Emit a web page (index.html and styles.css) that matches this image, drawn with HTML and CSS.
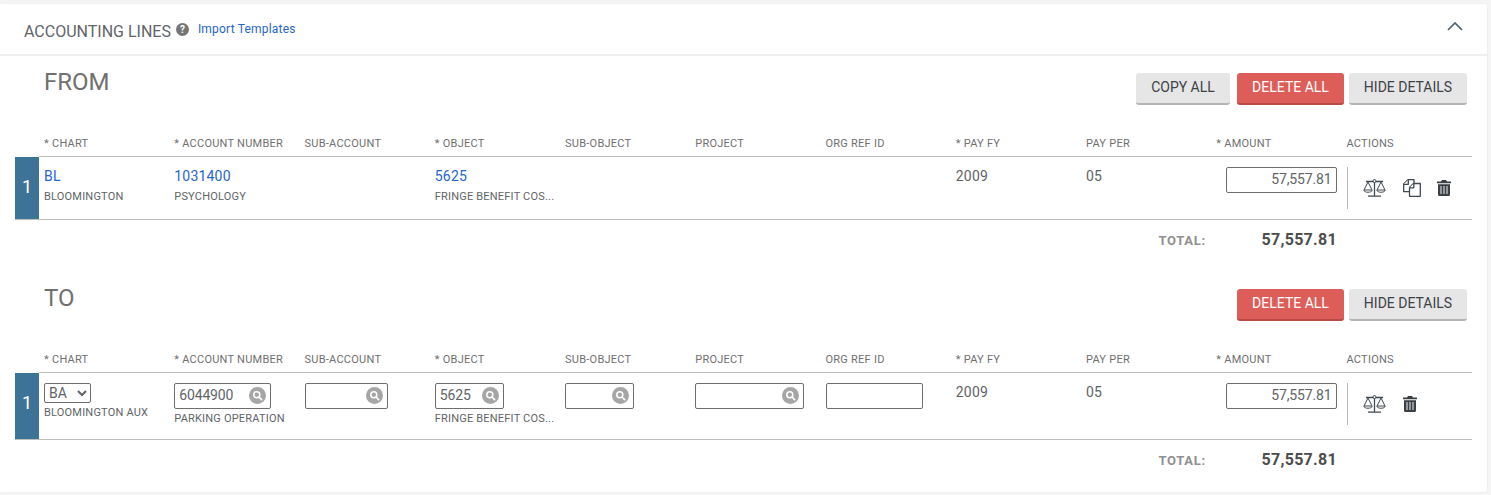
FILE: index.html
```html
<!DOCTYPE html>
<html lang="en">
<head>
    <meta charset="UTF-8">
    <meta name="viewport" content="width=device-width, initial-scale=1.0">
    <title>Accounting Lines</title>
    <link rel="stylesheet" href="styles.css">
</head>
<body>
    <svg class="icon-defs" width="0" height="0" aria-hidden="true">
        <symbol id="i-search" viewBox="0 0 17 17">
            <circle cx="8.5" cy="8.5" r="8.5" fill="#a6a6a6"/>
            <circle cx="7.8" cy="7.8" r="3" fill="none" stroke="#fff" stroke-width="1.5"/>
            <path d="M10 10l2.6 2.6" stroke="#fff" stroke-width="1.7" stroke-linecap="round"/>
        </symbol>
        <symbol id="i-balance" viewBox="0 0 23 18">
            <g fill="none" stroke="#3f4a52" stroke-width="1">
                <path d="M3 2.500h17M11.500 3v14M5 17.200h13" stroke-width="1.300"/>
                <circle cx="11.500" cy="2" r="1.500" fill="#fff"/>
                <path d="M5 3L1 11h8zM18 3l-4 8h8z"/>
                <path d="M.7 11c.5 3 8.100 3 8.600 0M13.700 11c.5 3 8.100 3 8.600 0"/>
            </g>
        </symbol>
        <symbol id="i-copy" viewBox="0 0 18 18">
            <g fill="#fff" stroke="#3f4a52" stroke-width="1.300" stroke-linejoin="round">
                <path d="M.7 5L5 .7h6v12H.7z"/>
                <path d="M.7 5.300h4.600V.7"/>
                <path d="M6.500 8.500L10.500 4.500h6.800v12.800H6.500z"/>
                <path d="M6.500 8.800h4.300V4.500"/>
            </g>
        </symbol>
        <symbol id="i-trash" viewBox="0 0 14 16">
            <path fill="#3a3f44" d="M5 0h4l1 1.500h4v1.800H0V1.500h4zM1 4.300h12V14.500A1.500 1.500 0 0 1 11.500 16h-9A1.500 1.500 0 0 1 1 14.500z"/>
            <path stroke="#dfe3e6" stroke-width="1.100" d="M4 6v8M7 6v8M10 6v8"/>
        </symbol>
    </svg>

    <section class="panel">
        <header class="panel-header">
            <h2 class="panel-title">ACCOUNTING LINES</h2>
            <span class="help-icon">?</span>
            <a class="import-link" href="#">Import Templates</a>
            <svg class="chevron" width="16" height="9" viewBox="0 0 16 9"><path d="M1 8l7-7 7 7" fill="none" stroke="#4a6272" stroke-width="1.700"/></svg>
        </header>

        <div class="group group-from">
            <div class="group-top">
                <h3 class="group-title">FROM</h3>
                <div class="buttons">
                    <button class="btn btn-copy">COPY ALL</button>
                    <button class="btn btn-danger">DELETE ALL</button>
                    <button class="btn btn-hide">HIDE DETAILS</button>
                </div>
            </div>
            <div class="cols cols-head">
                <div>* CHART</div>
                <div>* ACCOUNT NUMBER</div>
                <div>SUB-ACCOUNT</div>
                <div>* OBJECT</div>
                <div>SUB-OBJECT</div>
                <div>PROJECT</div>
                <div>ORG REF ID</div>
                <div>* PAY FY</div>
                <div>PAY PER</div>
                <div>* AMOUNT</div>
                <div>ACTIONS</div>
            </div>
            <div class="line">
                <div class="line-num">1</div>
                <div class="cols line-cols">
                    <div class="cell"><a href="#">BL</a><small>BLOOMINGTON</small></div>
                    <div class="cell"><a href="#">1031400</a><small>PSYCHOLOGY</small></div>
                    <div class="cell"></div>
                    <div class="cell"><a href="#">5625</a><small>FRINGE BENEFIT COS...</small></div>
                    <div class="cell"></div>
                    <div class="cell"></div>
                    <div class="cell"></div>
                    <div class="cell"><span>2009</span></div>
                    <div class="cell"><span>05</span></div>
                    <div class="cell cell-amount"><input class="field field-amount" type="text" value="57,557.81"></div>
                    <div class="actions">
                        <svg class="act act-balance"><use href="#i-balance"/></svg>
                        <svg class="act act-copy"><use href="#i-copy"/></svg>
                        <svg class="act act-trash"><use href="#i-trash"/></svg>
                    </div>
                </div>
            </div>
            <div class="total"><span class="total-label">TOTAL:</span><span class="total-value">57,557.81</span></div>
        </div>

        <div class="group group-to">
            <div class="group-top">
                <h3 class="group-title">TO</h3>
                <div class="buttons">
                    <button class="btn btn-danger">DELETE ALL</button>
                    <button class="btn btn-hide">HIDE DETAILS</button>
                </div>
            </div>
            <div class="cols cols-head">
                <div>* CHART</div>
                <div>* ACCOUNT NUMBER</div>
                <div>SUB-ACCOUNT</div>
                <div>* OBJECT</div>
                <div>SUB-OBJECT</div>
                <div>PROJECT</div>
                <div>ORG REF ID</div>
                <div>* PAY FY</div>
                <div>PAY PER</div>
                <div>* AMOUNT</div>
                <div>ACTIONS</div>
            </div>
            <div class="line line-edit">
                <div class="line-num">1</div>
                <div class="cols line-cols">
                    <div class="cell">
                        <select class="chart-select"><option>BA</option></select>
                        <small class="small-chart">BLOOMINGTON AUX</small>
                    </div>
                    <div class="cell">
                        <div class="lookup size-97"><input class="field" type="text" value="6044900"><svg class="search"><use href="#i-search"/></svg></div>
                        <small>PARKING OPERATION</small>
                    </div>
                    <div class="cell">
                        <div class="lookup size-83"><input class="field" type="text"><svg class="search"><use href="#i-search"/></svg></div>
                    </div>
                    <div class="cell">
                        <div class="lookup size-69"><input class="field" type="text" value="5625"><svg class="search"><use href="#i-search"/></svg></div>
                        <small>FRINGE BENEFIT COS...</small>
                    </div>
                    <div class="cell">
                        <div class="lookup size-69"><input class="field" type="text"><svg class="search"><use href="#i-search"/></svg></div>
                    </div>
                    <div class="cell">
                        <div class="lookup size-109"><input class="field" type="text"><svg class="search"><use href="#i-search"/></svg></div>
                    </div>
                    <div class="cell">
                        <div class="lookup size-97"><input class="field" type="text"></div>
                    </div>
                    <div class="cell"><span>2009</span></div>
                    <div class="cell"><span>05</span></div>
                    <div class="cell cell-amount"><input class="field field-amount" type="text" value="57,557.81"></div>
                    <div class="actions">
                        <svg class="act act-balance"><use href="#i-balance"/></svg>
                        <svg class="act act-trash"><use href="#i-trash"/></svg>
                    </div>
                </div>
            </div>
            <div class="total"><span class="total-label">TOTAL:</span><span class="total-value">57,557.81</span></div>
        </div>
    </section>
</body>
</html>
```

FILE: styles.css
```css
:root {
    --link: #1f66c9;
    --text: #666;
    --rule: #bdbdbd;
    --steel: #3d7396;
}

* {
    box-sizing: border-box;
}

body {
    margin: 0;
    padding: 4px 4px 3px 0;
    height: 495px;
    overflow: hidden;
    background-color: #f5f5f5;
    font-family: Roboto, sans-serif;
    color: var(--text);
}

.icon-defs {
    position: absolute;
}

.panel {
    height: 488px;
    background-color: #fff;
    border-radius: 0 3px 3px 0;
    box-shadow: 0 0 2px rgba(0, 0, 0, 0.08);
}

.panel-header {
    display: flex;
    align-items: flex-start;
    height: 52px;
    padding: 18px 24px 0 24px;
    border-bottom: 2px solid #f0f0f0;
}

.panel-title {
    margin: 0;
    font-size: 16px;
    line-height: 20px;
    font-weight: 400;
    color: #5f6468;
}

.help-icon {
    width: 13px;
    height: 13px;
    margin: 1px 0 0 5px;
    border-radius: 50%;
    background-color: #757575;
    color: #fff;
    font-size: 10px;
    font-weight: 700;
    line-height: 13px;
    text-align: center;
}

.import-link {
    margin: -1px 0 0 9px;
    font-size: 12px;
    line-height: 16px;
    letter-spacing: 0.2px;
    color: var(--link);
    text-decoration: none;
}

.chevron {
    margin: 0 0 0 auto;
}

.group {
    padding: 0 15px;
}

.group-from {
    height: 216px;
}

.group-top {
    display: flex;
    justify-content: space-between;
    height: 81px;
    padding: 12px 5px 0 29px;
}

.group-title {
    margin: 0;
    font-size: 24px;
    line-height: 28px;
    font-weight: 400;
    color: #707070;
}

.buttons {
    display: flex;
    gap: 5px;
    height: 32px;
    margin-top: 5px;
}

.btn {
    height: 32px;
    padding: 0 0 2px;
    border: 0;
    border-bottom: 2px solid #b5b5b5;
    border-radius: 3px;
    background-color: #e6e6e6;
    color: #3d4246;
    font-family: inherit;
    font-size: 14px;
}

.btn-copy {
    width: 94px;
    margin-right: 2px;
}

.btn-danger {
    width: 107px;
    background-color: #dd5e59;
    border-bottom-color: #b94a46;
    color: #fff;
}

.btn-hide {
    width: 118px;
}

.cols {
    display: grid;
    grid-template-columns: repeat(10, 130.25px) 1fr;
    margin-left: 29px;
}

.cols-head {
    height: 18px;
    margin-bottom: 1px;
    font-size: 11px;
    line-height: 14px;
    letter-spacing: 0.25px;
    color: #6f6f6f;
}

.line {
    display: flex;
    height: 64px;
    border-bottom: 1px solid var(--rule);
}

.line-edit {
    height: 68px;
}

.line-num {
    width: 24px;
    margin-top: 1px;
    padding-top: 19px;
    background-color: var(--steel);
    color: #fff;
    font-size: 18px;
    line-height: 22px;
    text-align: center;
    flex: none;
}

.line-cols {
    flex: 1;
    margin-left: 0;
    padding-left: 5px;
    border-top: 1px solid var(--rule);
}

.cell {
    padding-top: 10px;
    font-size: 14px;
    line-height: 18px;
    min-width: 0;
}

.cell a,
.cell span {
    display: block;
    line-height: 18px;
    letter-spacing: 0.2px;
    color: #5f6468;
}

.cell a {
    color: var(--link);
    text-decoration: none;
}

.cell small {
    display: block;
    margin-top: 5px;
    font-size: 11px;
    line-height: 14px;
    letter-spacing: 0.2px;
    color: #5f6468;
    white-space: nowrap;
}

.line-edit .cell small {
    margin-top: 3px;
}

.cell-amount {
    padding-left: 10px;
    padding-right: 10px;
}

.field {
    display: block;
    width: 100%;
    height: 26px;
    padding: 0 4px 2px;
    border: 1px solid #6e6e6e;
    border-radius: 2px;
    background-color: #fff;
    font-family: inherit;
    font-size: 14px;
    letter-spacing: -0.15px;
    color: #5f6468;
    outline: none;
}

.field-amount {
    text-align: right;
}

.lookup {
    position: relative;
}

.size-69 { width: 69px; }
.size-83 { width: 83px; }
.size-97 { width: 97px; }
.size-109 { width: 109px; }

.search {
    position: absolute;
    right: 5px;
    top: 4px;
    width: 17px;
    height: 17px;
}

.chart-select {
    display: block;
    width: 47px;
    height: 20px;
    padding: 0;
    border: 1px solid #6e6e6e;
    border-radius: 2px;
    background-color: #fff;
    font-family: inherit;
    font-size: 14px;
    color: #5f6468;
    margin-bottom: 3px;
}

.actions {
    display: flex;
    align-items: flex-start;
    gap: 16px;
    height: 42px;
    margin-top: 10px;
    padding: 12px 0 0 15px;
    border-left: 1px solid var(--rule);
}

.act {
    flex: none;
}

.act-balance {
    width: 23px;
    height: 18px;
}

.act-copy {
    width: 18px;
    height: 18px;
    margin-left: 1px;
}

.act-trash {
    width: 14px;
    height: 16px;
    margin: 1px 0 0 1px;
}

.act-copy + .act-trash {
    margin-left: 0;
}

.total {
    display: flex;
    justify-content: flex-end;
    align-items: baseline;
    padding: 10px 135px 0 0;
    font-weight: 700;
}

.total-label {
    width: 103px;
    font-size: 13px;
    letter-spacing: 0.7px;
    color: #8f8f8f;
}

.total-value {
    font-size: 16px;
    letter-spacing: 0.3px;
    color: #4d4d4d;
}
```
